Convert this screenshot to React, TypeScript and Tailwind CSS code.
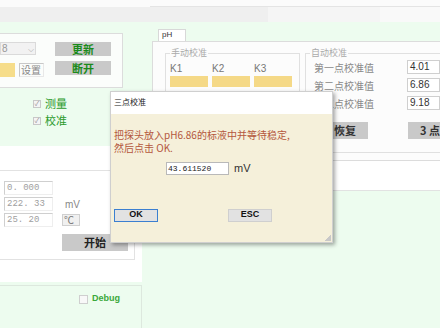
import React from 'react';

const cjk = "font-['Noto_Sans_CJK_SC','Noto_Sans',sans-serif]";

function Check({ label }: { label: string }) {
    return (
        <div className="flex items-center gap-[4px] h-[13px]">
            <span className="w-[8px] h-[8px] border border-[#c8c8c8] bg-[#f4f4f4] flex items-center justify-center text-[7px] leading-none text-[#9a9a9a]">✓</span>
            <span className="text-[11px] leading-none text-[#2a9a2a]">{label}</span>
        </div>
    );
}

function GrayBtn({ children, className }: { children: React.ReactNode; className: string }) {
    return (
        <div className={`bg-[#c9c9c9] flex items-center justify-center font-bold whitespace-nowrap ${className}`}>{children}</div>
    );
}

export default function App() {
    return (
        <div className={`relative w-[440px] h-[328px] overflow-hidden bg-[#edfcef] ${cjk}`}>
            {/* top strip */}
            <div className="h-[7px] bg-[#fbfbfb] flex">
                <div className="w-[150px]" />
                <div className="flex-1 border-b border-[#e4e4e4]" />
            </div>
            <div className="h-[15px] flex">
                <div className="w-[268px] bg-[#efefef]" />
                <div className="w-[112px] bg-[#f5f5f5]" />
                <div className="flex-1 bg-[#f9f9f9]" />
            </div>

            <div className="flex">
                {/* left column */}
                <div className="w-[144px] flex flex-col">
                    <div className="h-[11px]" />
                    <div className="w-[123px] h-[55px] bg-[#fbfdfb] border border-l-0 border-[#dcdcdc] flex pt-[8px]">
                        <div className="w-[55px] flex flex-col gap-[8px]">
                            <div className="w-[36px] h-[13px] bg-[#f2f2f2] border border-[#dadada] flex items-center justify-between px-[1px] text-[10px] text-[#999] leading-none">
                                <span className="font-['Liberation_Sans',sans-serif]">8</span>
                                <span className="text-[8px] text-[#aaa]">⌵</span>
                            </div>
                            <div className="flex gap-[4px] h-[14px]">
                                <div className="w-[15px] bg-[#f6dd8a]" />
                                <div className="w-[25px] border border-[#c8c8c8] border-r-[#e8e8e8] border-b-[#e8e8e8] text-[10px] leading-[12px] text-[#888] pl-[1px]">设置</div>
                            </div>
                        </div>
                        <div className="flex flex-col gap-[5px]">
                            <GrayBtn className="w-[56px] h-[14px] text-[11px] text-[#1a8a1a]">更新</GrayBtn>
                            <GrayBtn className="w-[56px] h-[14px] text-[11px] text-[#1a8a1a]">断开</GrayBtn>
                        </div>
                    </div>
                    <div className="h-[58px] pl-[33px] pt-[9px] flex flex-col gap-[4px]">
                        <Check label="测量" />
                        <Check label="校准" />
                    </div>
                    <div className="h-[136px] bg-white pt-[24px]">
                        <div className="w-[135px] h-[90px] border border-l-0 border-[#e2e2e2] pt-[10px] pl-[4px] flex flex-col gap-[2px]">
                            {['0. 000', '222. 33', '25. 20'].map((v, i) => (
                                <div key={v} className="flex items-center h-[14px]">
                                    <div className="w-[49px] h-[14px] border border-[#cfcfcf] border-r-[#eee] border-b-[#eee] text-[9px] leading-[12px] text-[#a0a0a0] pl-[2px] whitespace-nowrap overflow-hidden font-['Liberation_Mono',monospace]">{v}</div>
                                    {i === 1 && <span className="ml-[12px] text-[10px] text-[#888] font-['Liberation_Sans',sans-serif]">mV</span>}
                                    {i === 2 && <div className="ml-[9px] w-[18px] h-[12px] border border-[#d0d0d0] bg-[#f0f0f0] text-[10px] leading-[10px] text-[#777] pl-[1px]">℃</div>}
                                </div>
                            ))}
                            <div className="pl-[58px] pt-[5px]">
                                <GrayBtn className="w-[66px] h-[17px] text-[11px] text-[#222]">开始</GrayBtn>
                            </div>
                        </div>
                    </div>
                    <div className="h-[3px]" />
                    <div className="h-[50px] border border-l-0 border-[#dde8de] flex justify-end pr-[21px] pt-[7px]">
                        <div className="flex items-center gap-[4px] h-[12px]">
                            <span className="w-[9px] h-[9px] border border-[#cfcfcf] bg-[#f8f8f8]" />
                            <span className="text-[9px] font-bold text-[#3aa83a] font-['Liberation_Sans',sans-serif]">Debug</span>
                        </div>
                    </div>
                </div>

                {/* right column */}
                <div className="flex-1 flex flex-col pl-[10px]">
                    <div className="h-[7px]" />
                    <div className="ml-[6px] w-[28px] h-[12px] bg-white border border-b-0 border-[#d8d8d8] text-[8px] leading-[10px] pl-[3px] text-[#333] font-['Liberation_Sans',sans-serif]">pH</div>
                    <div className="h-[120px] bg-[#fcfcfc] border border-r-0 border-[#dcdcdc] flex gap-[5px] pl-[12px] pt-[11px]">
                        <div className="relative w-[135px] h-[40px] border border-[#e0e0e0] flex gap-[4px] pl-[4px] pt-[10px]">
                            <span className="absolute -top-[6px] left-[4px] bg-[#fcfcfc] px-[1px] text-[9px] leading-none text-[#aaa]">手动校准</span>
                            {['K1', 'K2', 'K3'].map(k => (
                                <div key={k} className="w-[38px] flex flex-col gap-[2px]">
                                    <span className="text-[10px] leading-[10px] text-[#777] font-['Liberation_Sans',sans-serif]">{k}</span>
                                    <div className="h-[11px] bg-[#f5d987]" />
                                </div>
                            ))}
                        </div>
                        <div className="relative flex-1 h-[100px] border border-r-0 border-[#e0e0e0] pt-[6px]">
                            <span className="absolute -top-[6px] left-[4px] bg-[#fcfcfc] px-[1px] text-[9px] leading-none text-[#aaa]">自动校准</span>
                            {[['第一点校准值', '4.01'], ['第二点校准值', '6.86'], ['第三点校准值', '9.18']].map(([l, v]) => (
                                <div key={v} className="flex items-center h-[14px] mb-[4px]">
                                    <span className="w-[68px] text-right text-[10px] text-[#888]">{l}</span>
                                    <div className="ml-[33px] flex-1 h-[14px] bg-white border border-[#cfcfcf] text-[10px] leading-[12px] text-[#333] pl-[2px] font-['Liberation_Sans',sans-serif]">{v}</div>
                                </div>
                            ))}
                            <div className="flex mt-[12px] pl-[16px]">
                                <GrayBtn className="w-[46px] h-[17px] text-[11px] text-[#333]">恢复</GrayBtn>
                                <GrayBtn className="ml-[40px] flex-1 h-[17px] text-[11px] text-[#333] justify-start pl-[12px]">3 点</GrayBtn>
                            </div>
                        </div>
                    </div>
                    <div className="h-[30px] bg-white border-b border-[#e2e2e2]" />
                </div>
            </div>

            {/* modal dialog */}
            <div className="absolute left-[110px] top-[91px] w-[223px] h-[152px] flex flex-col border border-[#cfcfcf] shadow-[2px_2px_4px_rgba(0,0,0,0.35)]">
                <div className="h-[22px] bg-white text-[8px] leading-[20px] pl-[3px] text-[#222]">三点校准</div>
                <div className="relative flex-1 bg-[#f5f0da] flex flex-col pl-[3px] pt-[14px]">
                    <p className="text-[10px] leading-[13px] text-[#b4573d]">把探头放入pH6.86的标液中并等待稳定,<br />然后点击 OK.</p>
                    <div className="flex items-center mt-[6px] pl-[52px]">
                        <div className="w-[63px] h-[13px] bg-white border border-[#b9b9b9] text-[8px] leading-[11px] pl-[1px] text-[#222] font-['Liberation_Mono',monospace]">43.611520</div>
                        <span className="ml-[5px] text-[11px] text-[#333] font-['Liberation_Sans',sans-serif]">mV</span>
                    </div>
                    <div className="flex mt-[32px]">
                        <div className="w-[44px] h-[13px] border border-[#3b7fd0] bg-[#e2e2e2] flex items-center justify-center text-[9px] font-bold text-[#111] font-['Liberation_Sans',sans-serif]">OK</div>
                        <div className="ml-[70px] w-[44px] h-[13px] border border-[#cfcfcf] bg-[#e2e2e2] flex items-center justify-center text-[9px] font-bold text-[#111] font-['Liberation_Sans',sans-serif]">ESC</div>
                    </div>
                    <span className="absolute right-[1px] bottom-[1px] w-[6px] h-[6px] bg-[linear-gradient(135deg,transparent_50%,#c8c8c8_50%)]" />
                </div>
            </div>
        </div>
    );
}
